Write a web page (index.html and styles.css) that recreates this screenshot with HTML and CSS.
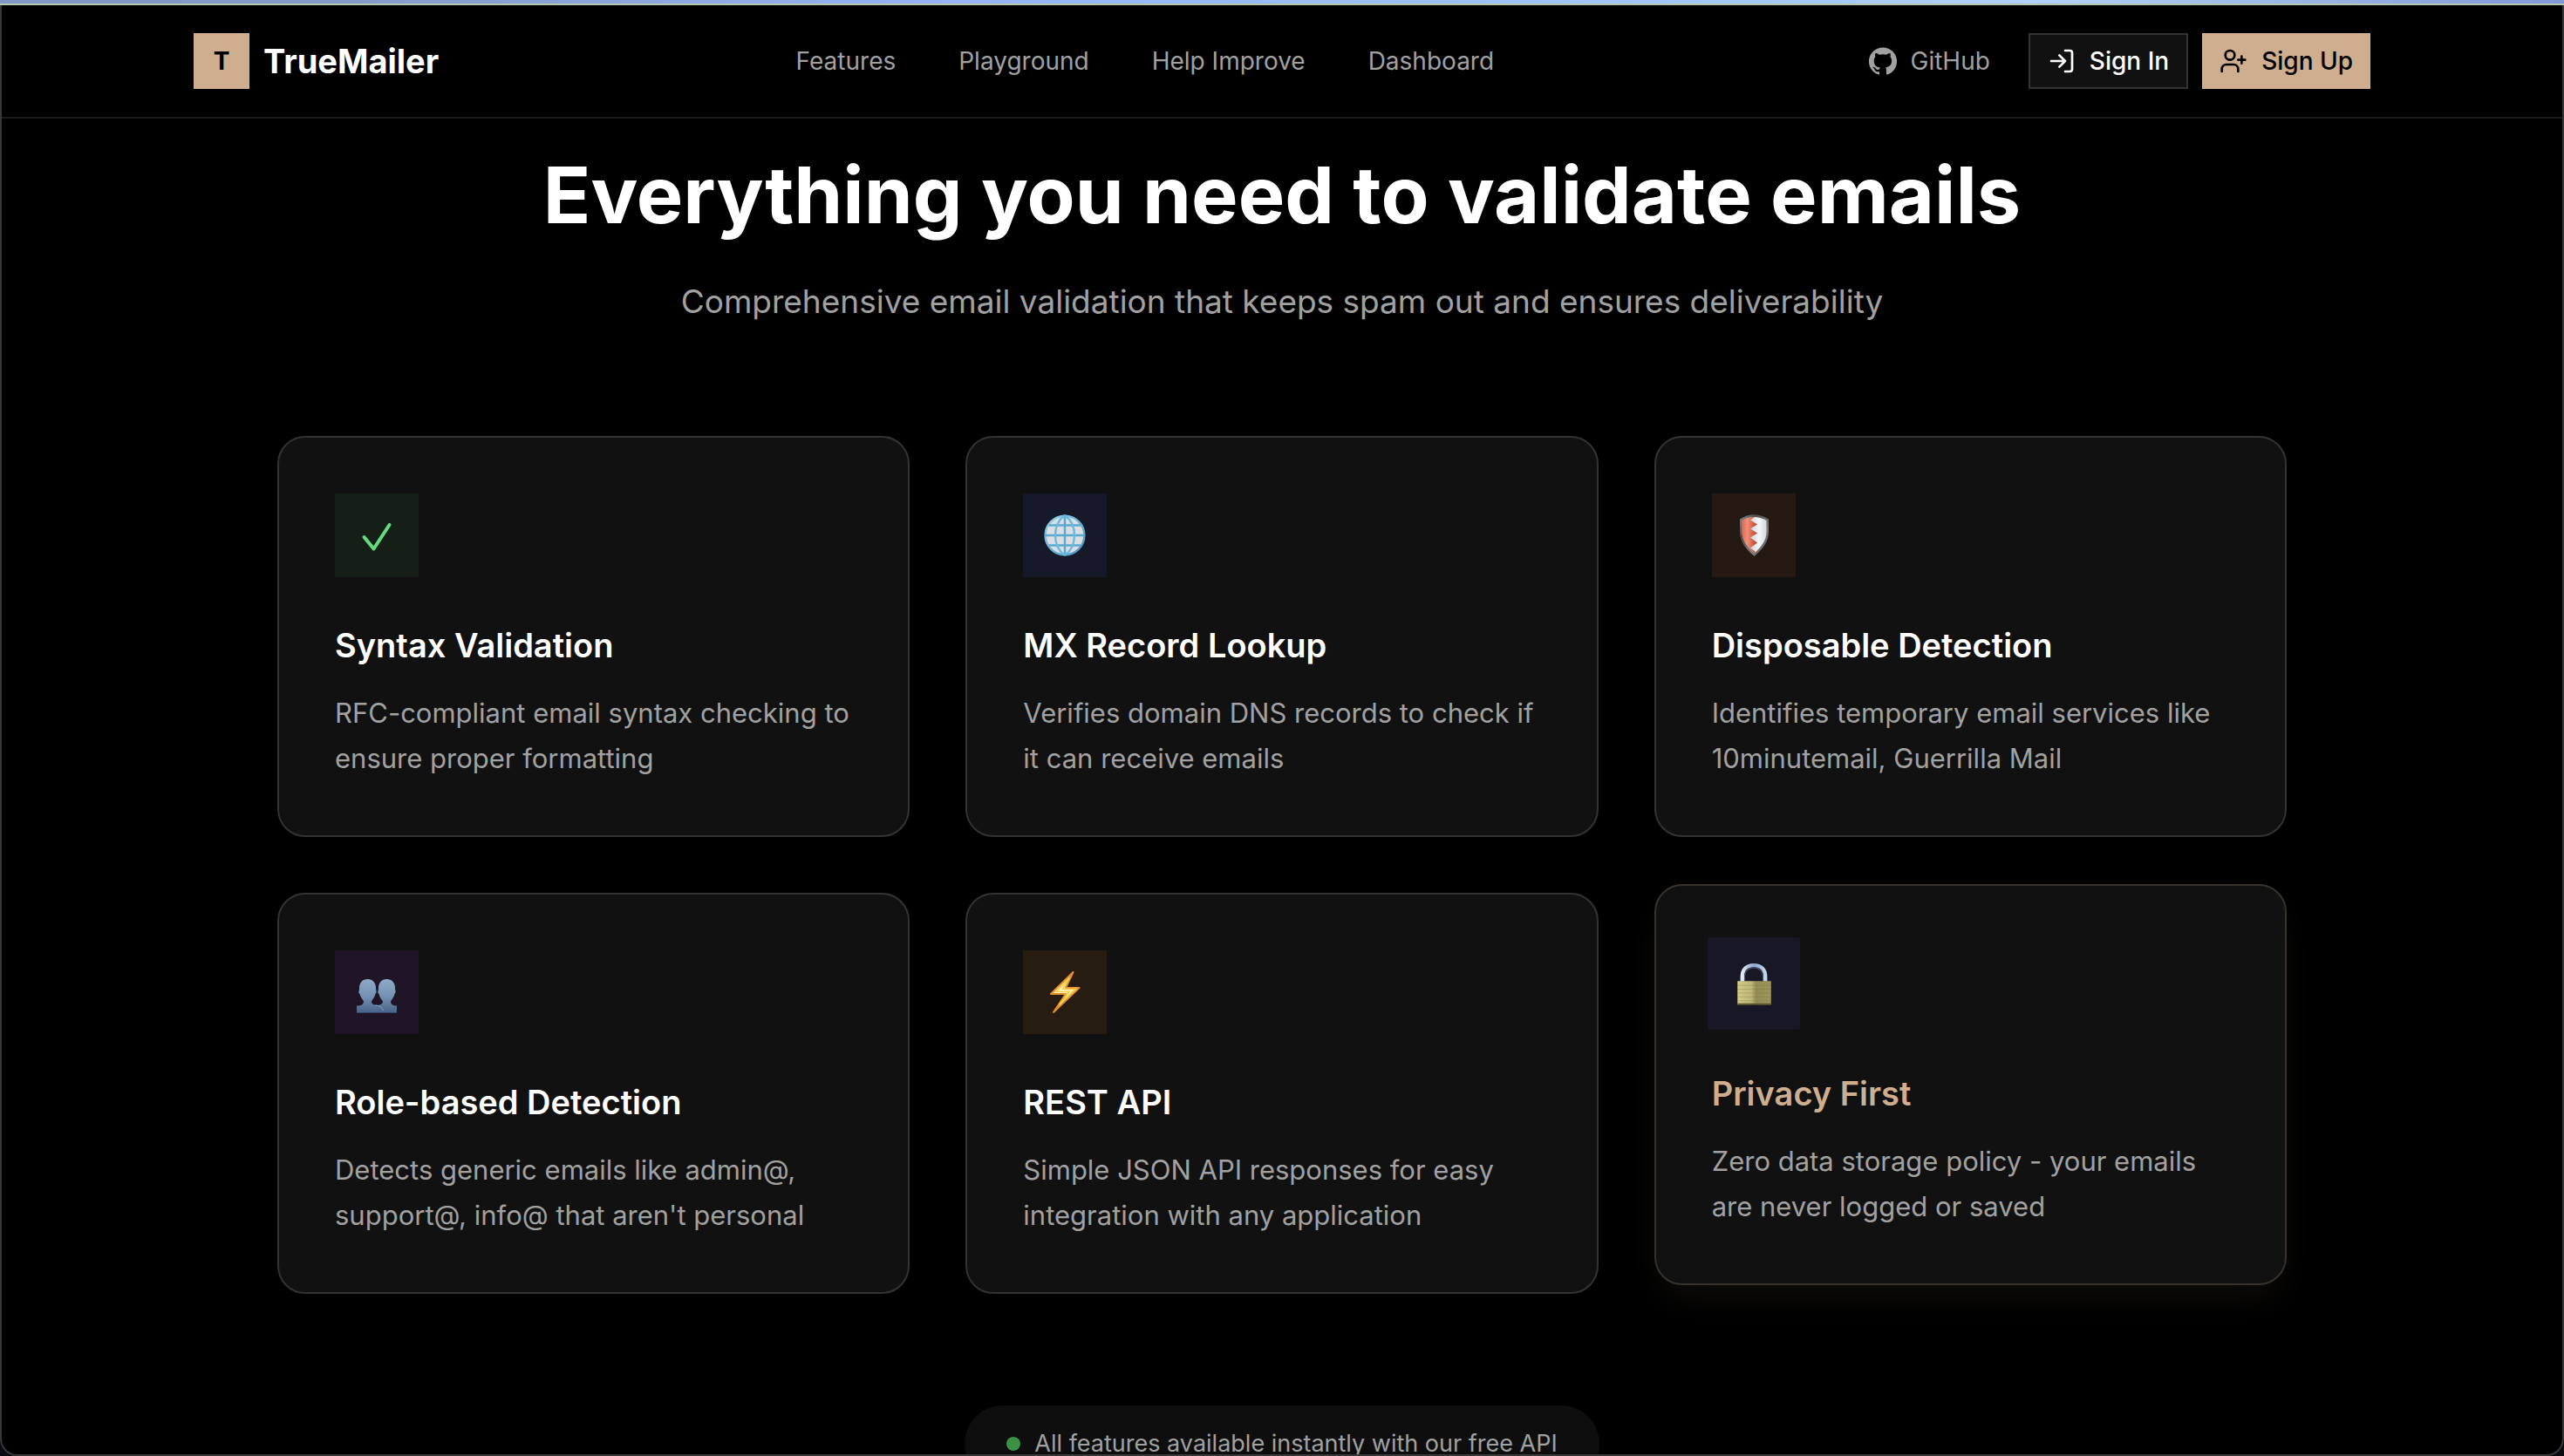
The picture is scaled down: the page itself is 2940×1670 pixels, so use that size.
FILE: index.html
```html
<!DOCTYPE html>
<html lang="en">
<head>
<meta charset="utf-8">
<meta name="viewport" content="width=device-width, initial-scale=1">
<title>TrueMailer</title>
<link rel="stylesheet" href="styles.css">
</head>
<body>
<div class="window-edge"></div>
<header class="header">
  <div class="header-inner">
    <a class="brand" href="#"><span class="brand-mark">T</span><span class="brand-name">TrueMailer</span></a>
    <nav class="nav">
      <a href="#features">Features</a>
      <a href="#playground">Playground</a>
      <a href="#improve">Help Improve</a>
      <a href="#dashboard">Dashboard</a>
    </nav>
    <div class="actions">
      <a class="github" href="#github">
        <svg class="icon" viewBox="0 0 24 24" fill="currentColor" aria-hidden="true"><path d="M12 .3a12 12 0 0 0-3.8 23.4c.6.1.8-.3.8-.6v-2c-3.3.7-4-1.6-4-1.6-.6-1.4-1.4-1.8-1.4-1.8-1-.7.1-.7.1-.7 1.2 0 1.9 1.2 1.9 1.2 1 1.8 2.8 1.3 3.5 1 0-.8.4-1.3.7-1.6-2.7-.3-5.5-1.3-5.5-6 0-1.2.5-2.3 1.3-3.1-.2-.4-.6-1.6 0-3.2 0 0 1-.3 3.4 1.2a11.5 11.5 0 0 1 6 0c2.3-1.5 3.3-1.2 3.3-1.2.6 1.6.2 2.8 0 3.2.9.8 1.3 1.9 1.3 3.2 0 4.6-2.8 5.6-5.5 5.9.5.4.9 1 .9 2.2v3.3c0 .3.1.7.8.6A12 12 0 0 0 12 .3"/></svg>
        <span>GitHub</span>
      </a>
      <div class="auth">
        <button class="btn btn-outline" type="button">
          <svg class="icon line" viewBox="0 0 24 24" aria-hidden="true"><path d="M15 3h4a2 2 0 0 1 2 2v14a2 2 0 0 1-2 2h-4M10 17l5-5-5-5M15 12H3"/></svg>
          <span>Sign In</span>
        </button>
        <button class="btn btn-solid" type="button">
          <svg class="icon line" viewBox="0 0 24 24" aria-hidden="true"><path d="M16 21v-2a4 4 0 0 0-4-4H6a4 4 0 0 0-4 4v2M19 8v6M22 11h-6"/><circle cx="9" cy="7" r="4"/></svg>
          <span>Sign Up</span>
        </button>
      </div>
    </div>
  </div>
</header>

<main class="features" id="features">
  <h1 class="title">Everything you need to validate emails</h1>
  <p class="subtitle">Comprehensive email validation that keeps spam out and ensures deliverability</p>

  <div class="grid">
    <article class="card">
      <div class="tile tile-green">
        <svg viewBox="0 0 96 96" aria-hidden="true"><path d="M33.500 50l11 13.500L62.500 36" fill="none" stroke="#62dc7f" stroke-width="4" stroke-linecap="round" stroke-linejoin="round"/></svg>
      </div>
      <h2>Syntax Validation</h2>
      <p>RFC-compliant email syntax checking to ensure proper formatting</p>
    </article>

    <article class="card">
      <div class="tile tile-blue">
        <svg viewBox="0 0 96 96" aria-hidden="true">
          <defs><linearGradient id="globe" x1="0" y1="0" x2="1" y2="1"><stop offset="0" stop-color="#8ad4f0"/><stop offset="1" stop-color="#4a93bd"/></linearGradient></defs>
          <circle cx="48" cy="48" r="22" fill="#dcdee2"/>
          <g fill="none" stroke="#5aa9cf" stroke-width="2.4">
            <circle cx="48" cy="48" r="22.4" stroke="url(#globe)"/>
            <path d="M48 25v46M25 48h46M30 36.500h36M30 59.500h36"/>
            <path d="M48 25c-7 5-11 13-11 23s4 18 11 23M48 25c7 5 11 13 11 23s-4 18-11 23" stroke="#69bcdf"/>
          </g>
        </svg>
      </div>
      <h2>MX Record Lookup</h2>
      <p>Verifies domain DNS records to check if it can receive emails</p>
    </article>

    <article class="card">
      <div class="tile tile-red">
        <svg viewBox="0 0 96 96" aria-hidden="true">
          <defs>
            <linearGradient id="rim" x1="0" y1="0" x2="1" y2="1"><stop offset="0" stop-color="#8a8a8a"/><stop offset=".3" stop-color="#4c4c4c"/><stop offset=".65" stop-color="#7d7d7d"/><stop offset="1" stop-color="#4c4c4c"/></linearGradient>
            <linearGradient id="red" x1="0" x2="1"><stop offset="0" stop-color="#e2674f"/><stop offset=".35" stop-color="#f28e78"/><stop offset="1" stop-color="#b53b22"/></linearGradient>
            <linearGradient id="silver" x1="0" x2="1"><stop offset="0" stop-color="#aeb1b5"/><stop offset=".7" stop-color="#f4f6f8"/><stop offset="1" stop-color="#d5d8dc"/></linearGradient>
          </defs>
          <path d="M32 29.500Q48 19 65 29.500V44c0 12-8 21-16.500 28C40 65 32 56 32 44z" fill="url(#rim)"/>
          <path d="M34.500 31Q48 23 62.500 31v13c0 10-6.500 18-14 24.500C41 62 34.500 54 34.500 44z" fill="url(#silver)"/>
          <path d="M34.500 31Q41 27 49 27l-5 3.500 8 5-8 5 8 5-8 5 8 6-8 6 5.500 4-1 2C41 62 34.500 54 34.500 44z" fill="url(#red)"/>
        </svg>
      </div>
      <h2>Disposable Detection</h2>
      <p>Identifies temporary email services like 10minutemail, Guerrilla Mail</p>
    </article>

    <article class="card">
      <div class="tile tile-purple">
        <svg viewBox="0 0 96 96" aria-hidden="true">
          <defs><linearGradient id="people" gradientUnits="userSpaceOnUse" x1="0" y1="33" x2="0" y2="72"><stop offset="0" stop-color="#8daac8"/><stop offset=".5" stop-color="#7492b3"/><stop offset="1" stop-color="#466388"/></linearGradient></defs>
          <path d="M37.500 33C43 33 47 37 47 43c0 1 0 2 .5 3.500S47 49 46.500 50c-1 4-3 6-4.500 8.500 0 3 2 4 6 4.500 4 0 7-1.500 7-4.500C53 56 51.500 54 50.500 50c-1-.5-1.500-2-1-3.500.5-1 .5-2.500.5-3.500 0-6 4-10 9.500-10S69 37 69 43c0 1 0 2 .5 3.500S69 49 68.500 50c-1 4-3 6-4.500 8.500 0 3 2 5 7 5V72H25v-8.500c6 0 8-2 8-5C31.500 56 29.500 54 28.500 50c-1-.5-1.500-2-1-3.500.5-1 .5-2.500.5-3.500 0-6 4-10 9.500-10z" fill="url(#people)"/>
          <path d="M46 63q7 0 9.500 6" fill="none" stroke="#7fa8c8" stroke-width="1"/>
          <path d="M25 71.500h46" stroke="#314b6c"/>
        </svg>
      </div>
      <h2>Role-based Detection</h2>
      <p>Detects generic emails like admin@, support@, info@ that aren't personal</p>
    </article>

    <article class="card">
      <div class="tile tile-orange">
        <svg viewBox="0 0 96 96" aria-hidden="true">
          <defs><linearGradient id="bolt" gradientUnits="userSpaceOnUse" x1="38" y1="36" x2="58" y2="60"><stop offset="0" stop-color="#fbd24a"/><stop offset=".4" stop-color="#fffce0"/><stop offset=".65" stop-color="#fff7bd"/><stop offset="1" stop-color="#f9bc35"/></linearGradient></defs>
          <path d="M57.500 25L32 50h17L35 71l29.500-28H49z" fill="url(#bolt)" stroke="#e2922f" stroke-width="2" stroke-linejoin="round"/>
          <path d="M53 32L38 47.500h15L42 62l18-17.500H45.500z" fill="none" stroke="#f8ce45" stroke-width="1.500"/>
        </svg>
      </div>
      <h2>REST API</h2>
      <p>Simple JSON API responses for easy integration with any application</p>
    </article>

    <article class="card card-active">
      <div class="tile tile-indigo">
        <svg viewBox="0 0 96 96" aria-hidden="true">
          <defs>
            <linearGradient id="brass" x1="0" x2="1"><stop offset="0" stop-color="#d9d38c"/><stop offset=".12" stop-color="#cbc583"/><stop offset=".42" stop-color="#bdb678"/><stop offset=".55" stop-color="#948d58"/><stop offset="1" stop-color="#9e955a"/></linearGradient>
            <linearGradient id="steel" x1="0" x2="1"><stop offset="0" stop-color="#dfe8f4"/><stop offset=".5" stop-color="#8da9d0"/><stop offset="1" stop-color="#c3d4ee"/></linearGradient>
          </defs>
          <path d="M36 46V41c0-8 5-12 12-12s12 4 12 12v5" fill="none" stroke="url(#steel)" stroke-width="4"/>
          <path d="M38.500 45V41c0-6 4-9.500 9.500-9.500s9.500 3.500 9.500 9.500v4" fill="none" stroke="#4c5366" stroke-width="1"/>
          <path d="M31 45.500h35V70H31z" fill="url(#brass)"/>
          <path d="M31 50h35M31 54h35M31 58h35M31 62h35M31 66h35" stroke="#77713f" stroke-width=".6" opacity=".5"/>
          <path d="M31 69.500h35" stroke="#5f582b" stroke-width="1.500"/>
        </svg>
      </div>
      <h2>Privacy First</h2>
      <p>Zero data storage policy - your emails are never logged or saved</p>
    </article>
  </div>

  <div class="pill"><span class="dot"></span><span>All features available instantly with our free API</span></div>
</main>
<div class="window-frame"></div>
</body>
</html>
```
FILE: styles.css
```css
* {
  box-sizing: border-box;
  margin: 0;
  padding: 0;
}

body {
  height: 100vh;
  overflow: hidden;
  background: #000;
  color: #fff;
  font-family: Inter, "Liberation Sans", sans-serif;
  font-size: 28px;
  line-height: 40px;
}

a {
  color: inherit;
  text-decoration: none;
}

.window-edge {
  height: 6px;
  border-bottom: 2px solid #b7c7ab;
  background: linear-gradient(90deg, #8098c8, #839bcb 14%, #94b2f5 36%, #9fc2fb 60%, #afd0f6 80%, #8098d8);
}

.window-frame {
  position: fixed;
  inset: 6px 0 0;
  border: 2px solid #383838;
  border-top: 0;
  border-radius: 0 0 20px 20px;
  box-shadow: 0 0 0 20px #0b0b12;
  clip-path: inset(0);
  pointer-events: none;
}

.header {
  border-bottom: 2px solid #1a1a1a;
}

.header-inner {
  display: flex;
  align-items: center;
  justify-content: space-between;
  max-width: 2560px;
  height: 128px;
  margin: 0 auto;
  padding: 0 32px;
}

.brand {
  display: flex;
  align-items: center;
  gap: 16px;
}

.brand-mark {
  display: grid;
  place-items: center;
  width: 64px;
  height: 64px;
  background: #ceae8e;
  color: #000;
  font-weight: 700;
}

.brand-name {
  font-size: 38px;
  font-weight: 700;
}

.nav {
  display: flex;
  gap: 72px;
  color: #a1a1a1;
}

.actions {
  display: flex;
  align-items: center;
  gap: 24px;
}

.github {
  display: flex;
  align-items: center;
  gap: 16px;
  padding: 0 20px;
  color: #a1a1a1;
}

.auth {
  display: flex;
  gap: 16px;
}

.icon {
  width: 32px;
  height: 32px;
}

.line {
  fill: none;
  stroke: currentColor;
  stroke-width: 2;
  stroke-linecap: round;
  stroke-linejoin: round;
}

.btn {
  display: flex;
  align-items: center;
  gap: 16px;
  height: 64px;
  padding: 0 20px;
  border: 0;
  font: inherit;
  font-weight: 500;
}

.btn-outline {
  border: 2px solid #333;
  background: #111;
  color: #fff;
}

.btn-solid {
  background: #ceae8e;
  color: #000;
}

.features {
  display: flex;
  flex-direction: column;
  align-items: center;
  padding: 40px 32px;
}

.title {
  margin-bottom: 46px;
  font-size: 90px;
  font-weight: 700;
  line-height: 96px;
}

.subtitle {
  margin-bottom: 126px;
  color: #a1a1a1;
  font-size: 37px;
  line-height: 56px;
}

.grid {
  display: grid;
  grid-template-columns: repeat(3, 1fr);
  gap: 64px;
  width: 100%;
  max-width: 2304px;
  margin-bottom: 128px;
}

.card {
  padding: 64px 56px 62px 64px;
  border: 2px solid #333;
  border-radius: 32px;
  background: #111;
}

.card h2 {
  margin: 50px 0 24px;
  font-size: 38px;
  font-weight: 600;
  line-height: 56px;
}

.card p {
  color: #a1a1a1;
  font-size: 31px;
  line-height: 52px;
}

.tile {
  width: 96px;
  height: 96px;
}

.tile svg {
  display: block;
}

.tile-green { background: #151f17; }
.tile-blue { background: #161929; }
.tile-red { background: #261813; }
.tile-purple { background: #201427; }
.tile-orange { background: #261c12; }
.tile-indigo { background: #181726; }

.card-active {
  transform: translateY(-10px);
  border-color: #38322c;
  box-shadow: 0 20px 40px -8px rgba(206, 174, 142, 0.08);
}

.card-active .tile {
  transform: scale(1.1);
}

.card-active h2 {
  color: #ceae8e;
}

.pill {
  display: flex;
  align-items: center;
  gap: 16px;
  padding: 24px 48px;
  border-radius: 44px;
  background: #0e0e0e;
  color: #a1a1a1;
  font-size: 27px;
}

.dot {
  width: 16px;
  height: 16px;
  border-radius: 50%;
  background: #3c9048;
}
```
